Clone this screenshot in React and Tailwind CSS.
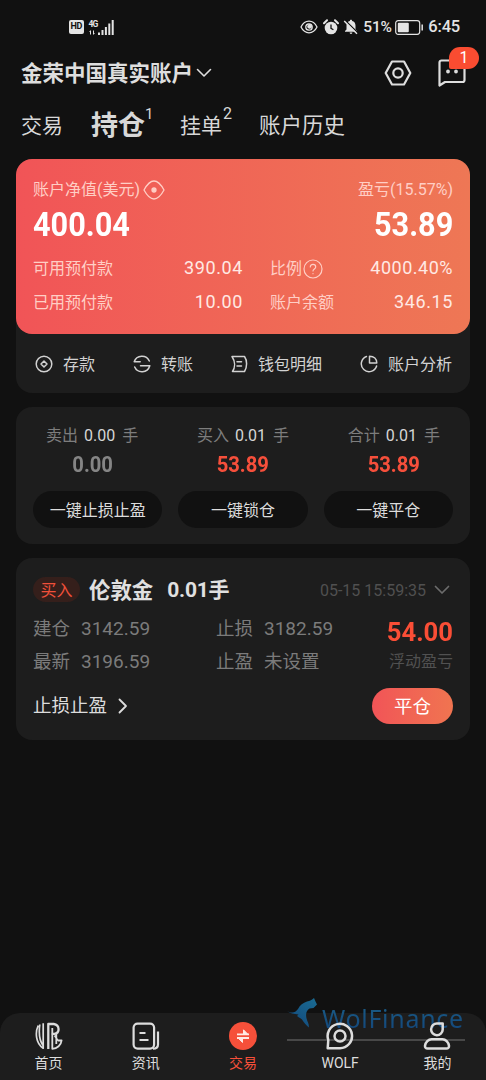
import React from "react";

const Svg = ({ children, className, box = "0 0 24 24", w = 1.8 }) => (
  <svg className={className} viewBox={box} fill="none" stroke="currentColor" strokeWidth={w} strokeLinecap="round" strokeLinejoin="round">
    {children}
  </svg>
);

function StatusBar() {
  return (
    <div className="flex h-[54px] items-center justify-between pl-[69px] pr-[26px] text-[#e4e4e4]">
      <div className="flex items-center gap-[5px]">
        <span className="flex h-[14px] w-[14.5px] items-center justify-center rounded-[2px] bg-[#e4e4e4] text-[9px] font-bold tracking-[-0.4px] text-[#111]">HD</span>
        <div className="flex items-end">
          <div className="flex flex-col items-start">
            <span className="h-[8px] text-[8.5px] leading-[8px] font-bold tracking-[-0.8px]">4G</span>
            <svg className="mt-[2px] h-[5px] w-[8px]" viewBox="0 0 8 5" fill="currentColor">
              <path d="M0 2 2 0v4.5H1V2zM6 3 4 5V.5h1V3z" />
            </svg>
          </div>
          <svg className="h-[15px] w-[17px]" viewBox="0 0 17 15" fill="currentColor">
            <path d="M0 12.5h2V15H0zM3.500 10h2v5h-2zM6.900 7h2v8h-2zM10.300 3.500h2V15h-2zM13.700 0h2v15h-2z" />
          </svg>
        </div>
      </div>
      <div className="flex items-center">
        <Svg className="h-[14px] w-[18px]" box="0 0 18 14" w={1.3}>
          <path d="M1 7C3 3 6 1.2 9 1.2S15 3 17 7c-2 4-5 5.800-8 5.800S3 11 1 7Z" />
          <circle cx="9" cy="7" r="3.200" />
          <circle cx="9.600" cy="6.400" r="1.700" fill="currentColor" />
        </Svg>
        <svg className="ml-[5px] h-[16px] w-[16px]" viewBox="0 0 16 16">
          <circle cx="8" cy="9" r="6.300" fill="currentColor" />
          <path d="M1 4.200 4 1.200M15 4.200l-3-3" stroke="currentColor" strokeWidth="2" strokeLinecap="round" />
          <path d="M8 5.600v3.800l2.400 1.400" stroke="#111" strokeWidth="1.300" fill="none" />
        </svg>
        <svg className="ml-[4px] h-[16px] w-[16px]" viewBox="0 0 16 16">
          <path d="M8 .8c.8 0 1.100.5 1.100 1.100 2.200.5 3.400 2.300 3.400 4.500v4l1.500 1.600v.8H2V12l1.500-1.600v-4c0-2.200 1.200-4 3.400-4.500C6.900 1.300 7.200.8 8 .8ZM6.600 13.600h2.800a1.400 1.400 0 0 1-2.800 0Z" fill="currentColor" />
          <path d="M2 1.200 15 14" stroke="#111" strokeWidth="1.400" />
          <path d="M1.200 2 14 14.800" stroke="currentColor" strokeWidth="1.500" />
        </svg>
        <span className="ml-[4px] w-[32px] text-[15.500px] leading-[20px] font-medium tracking-[-0.200px] whitespace-nowrap">51%</span>
        <svg className="h-[15px] w-[29px]" viewBox="0 0 29 15">
          <rect x=".7" y=".7" width="24" height="13.600" rx="2.500" fill="none" stroke="currentColor" strokeWidth="1.200" />
          <rect x="2.800" y="2.800" width="11" height="9.400" rx="1" fill="currentColor" />
          <path d="M27.200 4.500v6" stroke="currentColor" strokeWidth="1.500" />
        </svg>
        <span className="ml-[4px] text-[16.500px] leading-[20px] font-medium tracking-[-0.200px]">6:45</span>
      </div>
    </div>
  );
}

function Header() {
  return (
    <div className="flex h-[38px] items-center justify-between pl-[21px] pr-[20px] text-[#dedede]">
      <div className="flex items-center">
        <span className="pt-[2px] text-[21.500px] leading-[30px] font-bold">金荣中国真实账户</span>
        <Svg className="ml-[3px] h-[10px] w-[16px]" box="0 0 16 10" w={1.600}>
          <path d="m1.500 1.500 6.500 6.500 6.500-6.500" />
        </Svg>
      </div>
      <div className="flex items-center gap-[26px]">
        <Svg className="h-[28px] w-[28px]" box="0 0 28 28" w={2.200}>
          <path d="M8 2.500h12L26.300 14 20 25.500H8L1.700 14Z" />
          <circle cx="14" cy="14" r="4.700" />
        </Svg>
        <div className="relative h-[28px] w-[28px]">
          <Svg className="h-[28px] w-[28px]" box="0 0 28 28" w={2.200}>
            <path d="M1.500 26.500V3.500a2 2 0 0 1 2-2h21a2 2 0 0 1 2 2v17.500a2 2 0 0 1-2 2H7Z" />
            <circle cx="10" cy="12.500" r=".8" fill="currentColor" />
            <circle cx="18" cy="12.500" r=".8" fill="currentColor" />
          </Svg>
          <span className="absolute -top-[12px] left-[11px] flex h-[22px] w-[30px] items-center justify-center rounded-[11px] rounded-bl-[2px] bg-[#fa4c31] text-[16px] text-white">1</span>
        </div>
      </div>
    </div>
  );
}

function Tabs() {
  return (
    <div className="flex h-[67px] items-center pl-[21px] text-[21px] leading-[30px] text-[#d8d8d8]">
      <span>交易</span>
      <span className="relative ml-[28px] pt-px text-[27px] font-bold">
        持仓<sup className="absolute top-[-11px] left-[54px] text-[15px] leading-[30px] font-normal">1</sup>
      </span>
      <span className="relative ml-[35px]">
        挂单<sup className="absolute top-[-12px] left-[43px] text-[16px] leading-[30px]">2</sup>
      </span>
      <span className="ml-[37px] text-[21.500px]">账户历史</span>
    </div>
  );
}

const Big = ({ children, className }) => <span className={"inline-block font-bold " + className}>{children}</span>;

function Summary() {
  return (
    <section className="h-[234px] rounded-[16px] bg-[#1d1d1d]">
      <div className="flex h-[175px] flex-col rounded-[16px] bg-linear-to-r from-[#f15457] to-[#ee7755] px-[17px] pt-[19px] text-[#ffcec5]">
        <div className="flex h-[24px] items-center justify-between text-[16px] leading-[24px]">
          <span className="flex items-center">
            账户净值(美元)
            <Svg className="ml-[3px] h-[20px] w-[22px]" box="0 0 22 20" w={1.300}>
              <path d="M1 10C4 4.500 7 1 11 1s7 3.500 10 9c-3 5.500-6 9-10 9S4 15.500 1 10Z" />
              <circle cx="11" cy="10" r="2" fill="currentColor" />
            </Svg>
          </span>
          <span>盈亏(15.57%)</span>
        </div>
        <div className="flex h-[46px] items-center justify-between text-[33px] leading-[46px] text-white">
          <Big className="origin-left scale-x-[0.930]">400.04</Big>
          <Big className="origin-right scale-x-[0.930]">53.89</Big>
        </div>
        <div className="mt-[4px] grid grid-cols-[210px_27px_1fr] text-[16px] leading-[34px]">
          <div className="flex justify-between">
            <span>可用预付款</span>
            <span className="text-[18px] leading-[32px] tracking-[0.600px] text-[#ffe9e4]">390.04</span>
          </div>
          <i />
          <div className="flex justify-between">
            <span className="flex items-center">
              比例
              <Svg className="ml-[1px] h-[20px] w-[20px]" box="0 0 20 20" w={1.200}>
                <circle cx="10" cy="10" r="9" />
                <path d="M7.300 8c0-3.600 5.400-3.500 5.400 0 0 2-2.700 2-2.700 4M10 14.500v.2" />
              </Svg>
            </span>
            <span className="text-[18px] leading-[32px] tracking-[0.500px] text-[#ffe9e4]">4000.40%</span>
          </div>
          <div className="flex justify-between">
            <span>已用预付款</span>
            <span className="text-[18px] leading-[32px] tracking-[0.600px] text-[#ffe9e4]">10.00</span>
          </div>
          <i />
          <div className="flex justify-between">
            <span>账户余额</span>
            <span className="text-[18px] leading-[32px] tracking-[0.600px] text-[#ffe9e4]">346.15</span>
          </div>
        </div>
      </div>
      <div className="flex h-[60px] items-center justify-between pl-[19px] pr-[18px] text-[16px] leading-[24px] text-[#d2d2d2]">
        <span className="flex items-center gap-[10px]">
          <Svg className="h-[18px] w-[18px]" box="0 0 18 18" w={1.500}>
            <circle cx="9" cy="9" r="7.800" />
            <path d="m9 6 3 3-3 3-3-3Z" />
          </Svg>
          <span className="pt-[2px]">存款</span>
        </span>
        <span className="flex items-center gap-[10px]">
          <Svg className="h-[18px] w-[18px]" box="0 0 18 18" w={1.500}>
            <path d="M1.200 6.800h6M1.200 6.800C3.500-.4 13.500-.5 16.300 6M16.800 10.700H7.500M16.800 10.700C14.500 18.400 4.500 18.500 1.700 12" />
          </Svg>
          <span className="pt-[2px]">转账</span>
        </span>
        <span className="flex items-center gap-[10px]">
          <Svg className="h-[18px] w-[17px]" box="0 0 17 18" w={1.500}>
            <path d="M1 1.500h12.500c2.800 4 2.800 10.500 0 15H1.500c3-4.500 2.500-10.500-.5-15ZM6 6.800h4.500M6 11h4.500" />
          </Svg>
          <span className="pt-[2px]">钱包明细</span>
        </span>
        <span className="flex items-center gap-[10px]">
          <Svg className="h-[18px] w-[18px]" box="0 0 18 18" w={1.500}>
            <path d="M6.500 1.500A7.800 7.800 0 1 0 16.600 11M9.500 1.200V8h7.300C16.800 4 14 1.200 9.500 1.200Z" />
          </Svg>
          <span className="pt-[2px]">账户分析</span>
        </span>
      </div>
    </section>
  );
}

const totals = [
  { label: "卖出", lots: "0.00", value: "0.00", color: "text-[#858585]", action: "一键止损止盈", pad: "pr-[11px]" },
  { label: "买入", lots: "0.01", value: "53.89", color: "text-[#f64f3b]", action: "一键锁仓", pad: "" },
  { label: "合计", lots: "0.01", value: "53.89", color: "text-[#f64f3b]", action: "一键平仓", pad: "pl-[11px]" },
];

function Totals() {
  return (
    <section className="mt-[14px] grid h-[137px] grid-cols-3 gap-x-[16px] rounded-[16px] bg-[#1d1d1d] px-[17px] pt-[17px]">
      {totals.map((t) => (
        <div key={t.label} className="flex flex-col items-center">
          <div className={"flex h-[24px] gap-[6px] text-[16px] leading-[24px] text-[#7d7d7d] " + t.pad}>
            <span>{t.label}</span>
            <span className="text-[#d5d5d5]">{t.lots}</span>
            <span className="pl-[1px]">手</span>
          </div>
          <div className={t.pad}>
            <Big className={"scale-x-[0.940] text-[21.500px] leading-[34px] " + t.color}>{t.value}</Big>
          </div>
          <button className="mt-[9px] h-[37px] w-full rounded-full bg-[#111111] text-[16px] leading-[39px] text-[#dddddd]">{t.action}</button>
        </div>
      ))}
    </section>
  );
}

function Position() {
  return (
    <section className="mt-[14px] h-[182px] rounded-[16px] bg-[#1d1d1d] px-[17px] pt-[17px]">
      <div className="flex h-[29px] items-center leading-[29px]">
        <span className="flex h-[25px] w-[47px] items-center justify-center rounded-full bg-[#351f1b] pt-px text-[16px] text-[#f0503a]">买入</span>
        <span className="ml-[9px] pt-px text-[21.400px] font-bold text-[#e0e0e0]">伦敦金</span>
        <span className="ml-[14px] pt-px text-[21px] font-bold tracking-[-0.200px] text-[#e0e0e0]">0.01手</span>
        <span className="ml-auto pt-px text-[16px] text-[#505050]">05-15 15:59:35</span>
        <Svg className="ml-[8px] mr-[3px] h-[10px] w-[16px] text-[#6c6c6c]" box="0 0 16 10" w={1.700}>
          <path d="m1.500 1.500 6.500 6.500 6.500-6.500" />
        </Svg>
      </div>
      <div className="mt-[9px] flex text-[18.500px] leading-[33px] text-[#7b7b7b]">
        <div className="w-[183px]">
          <div className="flex gap-[11px]"><span>建仓</span><span className="text-[19px] leading-[31px]">3142.59</span></div>
          <div className="flex gap-[11px]"><span>最新</span><span className="text-[19px] leading-[31px]">3196.59</span></div>
        </div>
        <div>
          <div className="flex gap-[11px]"><span>止损</span><span className="text-[19px] leading-[31px]">3182.59</span></div>
          <div className="flex gap-[11px]"><span>止盈</span><span>未设置</span></div>
        </div>
        <div className="ml-auto flex flex-col items-end">
          <Big className="mt-px origin-right scale-x-[0.960] text-[26.700px] leading-[36px] text-[#fa4e36]">54.00</Big>
          <span className="text-[16px] leading-[24px] text-[#515151]">浮动盈亏</span>
        </div>
      </div>
      <div className="mt-[9px] flex h-[36px] items-center justify-between text-[18.500px] leading-[38px]">
        <span className="flex items-center text-[#dcdcdc]">
          止损止盈
          <Svg className="ml-[11px] h-[16px] w-[10px]" box="0 0 10 16" w={1.800}>
            <path d="m1.500 1.500 6.500 6.500-6.500 6.500" />
          </Svg>
        </span>
        <button className="h-[36px] w-[81px] rounded-full bg-linear-to-r from-[#f15457] to-[#f07450] text-white">平仓</button>
      </div>
    </section>
  );
}

function NavItem({ label, active, children }) {
  return (
    <div className={"relative flex flex-1 flex-col items-center pt-[9px] " + (active ? "text-[#f6503a]" : "text-[#dddddd]")}>
      <svg className="h-[28px] w-[28px]" viewBox="0 0 28 28" fill="none" stroke="currentColor" strokeWidth="2.200" strokeLinejoin="round">{children}</svg>
      <span className="mt-[3px] text-[14px] leading-[20px]">{label}</span>
    </div>
  );
}

function Watermark() {
  return (
    <div className="pointer-events-none absolute -top-[15px] left-[287px] h-[43px] w-[178px] border-b-2 border-[#484848]">
      <svg className="absolute top-0 left-0 h-[32px] w-[31px]" viewBox="0 0 31 32">
        <defs>
          <linearGradient id="wolf" x1="1" y1="0" x2=".3" y2="1">
            <stop offset="0" stopColor="#1a6c93" />
            <stop offset="1" stopColor="#134a7c" />
          </linearGradient>
        </defs>
        <path d="M0 13c5 2.500 8 2 11-2 2-4 5-6 9-7.500 3-.5 5-1.500 7-3.500l1.500 3.500 1.500 3-3.500 3.500-4 .5c-4 3-4.500 7-1.500 14 .8 1.800 1 3.500.8 5-2.500-2.500-4.500-4-6.800-8-1.500-1.500-3.500-2-5-3.500l1.500-1.500C7 16 3 15.500 0 13Z" fill="url(#wolf)" />
      </svg>
      <span className="absolute top-[4px] left-[35px] bg-linear-to-b from-[#1b5e86] to-[#13447a] bg-clip-text font-['Noto_Sans'] text-[25px] leading-[32px] tracking-[0.700px] text-transparent">WolFinance</span>
    </div>
  );
}

function BottomNav() {
  return (
    <nav className="relative mt-auto flex h-[67px] rounded-t-[20px] bg-[#1d1d1d]">
      <Watermark />
      <NavItem label="首页">
        <g strokeWidth="2.300">
          <path d="M3.200 3.500C.2 10 .3 21 8.200 26.200V1.200M4.800 2.500C3.800 10 4 18 8 23.500" strokeWidth="1.700" />
          <path d="M13.300 27V2h5.500c6 .8 6.500 9.200.5 9.800h-2.500" />
          <path d="M17.300 6v20.800c5-.3 8.800-3.800 9.300-8.300h-3.300c-1-.2-1.800-2.500-3.800-5M21.300 12v10" strokeWidth="1.800" />
        </g>
      </NavItem>
      <NavItem label="资讯">
        <rect x="1.600" y="1.600" width="20.500" height="25" rx="4" />
        <path d="M7.500 11h6M7.500 18h9M26 9.500v13c0 3-1.500 4.200-5 4.200" />
      </NavItem>
      <NavItem label="交易" active>
        <circle cx="14" cy="14" r="14" fill="currentColor" stroke="none" />
        <path d="M8 12.400h12M8 16h12" stroke="#ffe9e4" strokeWidth="1.900" />
        <path d="M14.500 7.800v4.600H19ZM13.500 20.500V16H9Z" fill="#ffe9e4" stroke="#ffe9e4" strokeWidth="1" />
      </NavItem>
      <NavItem label="WOLF">
        <path d="M1.700 26.200 2.300 18A12.200 12.200 0 1 1 14 26.200Z" strokeWidth="2.500" />
        <circle cx="14" cy="14" r="5.500" strokeWidth="2.500" />
      </NavItem>
      <NavItem label="我的">
        <path d="M14 1.600h5.700v6A5.800 5.800 0 1 1 14 1.600ZM8.500 17.200h11c3 0 6 3 6.500 6.500.2 1.700-.8 2.800-2.500 2.800h-19c-1.700 0-2.700-1.100-2.500-2.800.5-3.500 3.500-6.500 6.500-6.500Z" strokeWidth="2.500" />
      </NavItem>
    </nav>
  );
}

export default function App() {
  return (
    <main className="flex h-[1080px] w-[486px] flex-col overflow-hidden bg-[#111111] font-[Roboto,'Noto_Sans_CJK_SC',sans-serif]">
      <StatusBar />
      <Header />
      <Tabs />
      <div className="px-[16px]">
        <Summary />
        <Totals />
        <Position />
      </div>
      <BottomNav />
    </main>
  );
}
